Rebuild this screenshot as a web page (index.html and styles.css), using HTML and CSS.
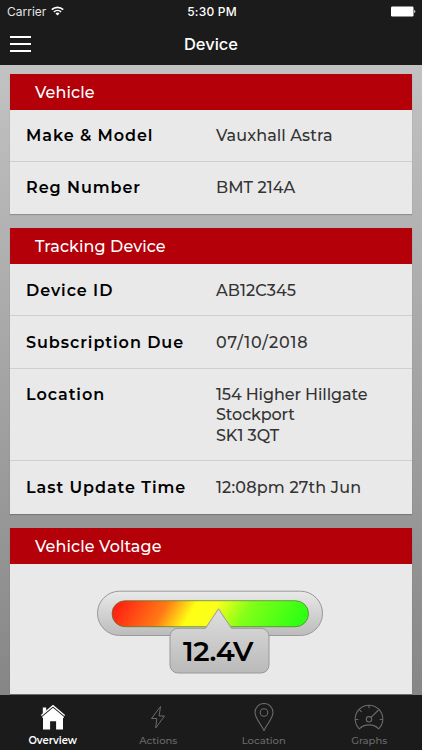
FILE: index.html
```html
<!DOCTYPE html>
<html lang="en">

<head>
    <meta charset="UTF-8">
    <meta name="viewport" content="width=device-width, initial-scale=1.0">
    <title>Device</title>

    <link rel="stylesheet" href="styles.css">
</head>

<body>
    <header class="top">
        <div class="status-bar">
            <div class="carrier">
                <span>Carrier</span>
                <svg width="13" height="10" viewBox="0 0 13 10" fill="none" stroke="#fff" stroke-width="1.6">
                    <path d="M0.8 3.7a8.2 8.2 0 0 1 11.4 0" />
                    <path d="M2.9 5.9a5.2 5.2 0 0 1 7.2 0" />
                    <path d="M6.5 9.5L4.5 7.5a2.9 2.9 0 0 1 4 0z" fill="#fff" stroke="none" />
                </svg>
            </div>
            <span class="clock">5:30 PM</span>
            <svg class="battery" width="25" height="11" viewBox="0 0 25 11" fill="#fff">
                <rect x="0" y="0.5" width="22.5" height="10" rx="1.2" />
                <path d="M23.3 4c1.4.2 1.4 2.8 0 3z" />
            </svg>
        </div>
        <div class="nav-bar">
            <button class="menu" aria-label="Menu">
                <span></span>
                <span></span>
                <span></span>
            </button>
            <h1>Device</h1>
        </div>
    </header>

    <main>
        <!-- Vehicle -->
        <section class="card">
            <h2>Vehicle</h2>
            <dl>
                <div class="row">
                    <dt>Make &amp; Model</dt>
                    <dd>Vauxhall Astra</dd>
                </div>
                <div class="row">
                    <dt>Reg Number</dt>
                    <dd>BMT 214A</dd>
                </div>
            </dl>
        </section>

        <!-- Tracking Device -->
        <section class="card">
            <h2>Tracking Device</h2>
            <dl>
                <div class="row">
                    <dt>Device ID</dt>
                    <dd>AB12C345</dd>
                </div>
                <div class="row">
                    <dt>Subscription Due</dt>
                    <dd class="date">07/10/2018</dd>
                </div>
                <div class="row">
                    <dt>Location</dt>
                    <dd class="address">154 Higher Hillgate<br>Stockport<br>SK1 3QT</dd>
                </div>
                <div class="row">
                    <dt>Last Update Time</dt>
                    <dd class="time">12:08pm 27th Jun</dd>
                </div>
            </dl>
        </section>

        <!-- Vehicle Voltage -->
        <section class="card voltage">
            <h2>Vehicle Voltage</h2>
            <div class="gauge">
                <svg width="228" height="85" viewBox="0 0 228 85">
                    <defs>
                        <linearGradient id="shell" x1="0" y1="0" x2="0" y2="1">
                            <stop offset="0" stop-color="#e9e9e9" />
                            <stop offset="1" stop-color="#bcbcbc" />
                        </linearGradient>
                        <linearGradient id="bubble" x1="0" y1="0" x2="0" y2="1">
                            <stop offset="0" stop-color="#dedede" />
                            <stop offset="1" stop-color="#bababa" />
                        </linearGradient>
                        <linearGradient id="level" gradientUnits="userSpaceOnUse" x1="38" y1="-20" x2="184" y2="64">
                            <stop offset="0" stop-color="#ff1a12" />
                            <stop offset="0.27" stop-color="#ff7a16" />
                            <stop offset="0.42" stop-color="#ffff14" />
                            <stop offset="0.53" stop-color="#fbff1a" />
                            <stop offset="0.7" stop-color="#84ff18" />
                            <stop offset="1" stop-color="#30ff14" />
                        </linearGradient>
                    </defs>
                    <rect x="1.5" y="1.2" width="225" height="44.3" rx="22.1" fill="url(#shell)" stroke="#999" />
                    <rect x="16" y="10.7" width="196.5" height="26" rx="13" fill="url(#level)" stroke="#4d7a20" stroke-opacity="0.7" />
                    <path d="M82 38.3H109.5L122.5 18.8L135.5 38.3H165a8 8 0 0 1 8 8V75a8 8 0 0 1-8 8H82a8 8 0 0 1-8-8V46.3a8 8 0 0 1 8-8z" fill="url(#bubble)" stroke="#999" />
                    <text class="reading" x="122" y="71" text-anchor="middle">12.4V</text>
                </svg>
            </div>
        </section>
    </main>

    <nav class="tab-bar">
        <a class="tab active">
            <svg width="26" height="29" viewBox="0 0 26 29">
                <path d="M2.8 4.5h3.4v3.5l-3.4 2.9z" fill="#fff" />
                <path d="M1.3 12.4L13 2.7l11.7 9.7" fill="none" stroke="#fff" stroke-width="1.3" />
                <path d="M13 4.8l10.8 9V15h-.8v11.5h-6.9v-8.2h-6v8.2H3V14.8h-.8v-1z" fill="#fff" />
            </svg>
            <span>Overview</span>
        </a>
        <a class="tab">
            <svg width="26" height="29" viewBox="0 0 26 29" fill="none" stroke="#6a6a6a">
                <path d="M15.5 3.5L6.5 15.5h5.3L10.7 25l8.8-12h-5.4z" />
            </svg>
            <span>Actions</span>
        </a>
        <a class="tab">
            <svg width="26" height="29" viewBox="0 0 26 29" fill="none" stroke="#6a6a6a" stroke-width="1.1">
                <path d="M13 27.5C10.5 22 4 15 4 9.5a9 9 0 0 1 18 0C22 15 15.5 22 13 27.5z" />
                <circle cx="13" cy="9.5" r="3.8" />
            </svg>
            <span>Location</span>
        </a>
        <a class="tab">
            <svg width="30" height="29" viewBox="0 0 30 29" fill="none" stroke="#6a6a6a" stroke-width="1.1">
                <path d="M5.3 25.8a13.8 13.8 0 1 1 19.4 0c-5-5.3-14.4-5.3-19.4 0z" />
                <circle cx="15" cy="16.3" r="2.7" />
                <path d="M17 14.4L24.5 7M15 2.3v3M1.3 16.5h3M25.7 16.5h3M5.5 6.8l2 2" />
            </svg>
            <span>Graphs</span>
        </a>
    </nav>
</body>

</html>
```
FILE: styles.css
```css
* {
    box-sizing: border-box;
}

body {
    display: flex;
    flex-direction: column;
    height: 750px;
    margin: 0;
    overflow: hidden;
    background: linear-gradient(#c2c2c2 65px, #868686 695px);
    font-family: Montserrat, Inter, sans-serif;
}

.top {
    height: 65px;
    background-color: #1b1b1b;
    color: #fff;
    font-family: Inter, sans-serif;
}

.status-bar {
    display: grid;
    grid-template-columns: 1fr auto 1fr;
    align-items: center;
    height: 22px;
    padding: 0 6px 0 7px;
    font-size: 12px;
}

.carrier {
    display: flex;
    align-items: center;
    gap: 5px;
    color: #e4e4e4;
}

.clock {
    padding-left: 1px;
    font-weight: 500;
    letter-spacing: 0.2px;
}

.battery {
    justify-self: end;
}

.nav-bar {
    display: grid;
    grid-template-columns: 1fr auto 1fr;
    align-items: center;
    height: 43px;
    padding: 0 10px;
}

.menu {
    display: flex;
    flex-direction: column;
    gap: 5px;
    width: 21px;
    padding: 0;
    border: none;
    background: none;
}

.menu span {
    height: 2px;
    background-color: #fff;
}

.nav-bar h1 {
    margin: 0;
    font-size: 16.5px;
    font-weight: 500;
}

main {
    flex: 1;
    display: flex;
    flex-direction: column;
    gap: 14.3px;
    padding: 8.5px 10px 0;
    overflow: hidden;
}

.card {
    background-color: #e9e9e9;
    box-shadow: 0 1px 1px rgba(0, 0, 0, 0.2);
}

.card h2 {
    height: 36px;
    margin: 0;
    padding-left: 25px;
    background-color: #b30009;
    color: #fff;
    font-size: 16px;
    font-weight: 500;
    line-height: 37px;
    letter-spacing: 0.1px;
}

.card dl {
    margin: 0;
}

.row {
    display: flex;
    padding: 16.5px 16px 14.4px;
    border-bottom: 1px solid #cfcfcf;
    line-height: 20.3px;
    font-size: 16px;
}

.row:last-child {
    border-bottom-color: transparent;
}

.row dt {
    width: 190px;
    color: #000;
    font-weight: 600;
    letter-spacing: 0.95px;
}

.row dd {
    margin: 0;
    color: #333;
    font-weight: 500;
    letter-spacing: 0.1px;
}

.row .date {
    letter-spacing: 0.9px;
}

.row .time {
    letter-spacing: 0.2px;
}

.row .address {
    letter-spacing: -0.1px;
}

.voltage {
    flex: none;
    height: 166px;
}

.gauge {
    display: flex;
    justify-content: center;
    padding: 26px 2px 0 0;
}

.reading {
    font-size: 28px;
    font-weight: 600;
    letter-spacing: -0.4px;
}

.tab-bar {
    display: grid;
    grid-template-columns: repeat(4, 1fr);
    height: 55px;
    background-color: #1b1b1b;
}

.tab {
    display: flex;
    flex-direction: column;
    align-items: center;
    padding-top: 8px;
    color: #6a6a6a;
    font-size: 10px;
    font-weight: 500;
    line-height: 17px;
}

.tab.active {
    color: #fff;
    font-weight: 600;
}
```
